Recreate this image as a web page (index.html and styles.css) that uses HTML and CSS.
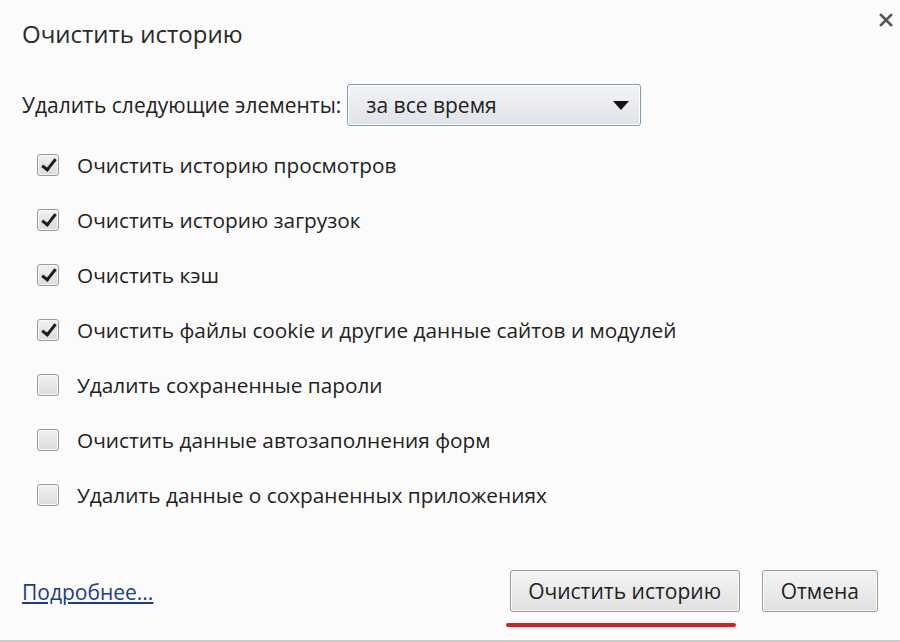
FILE: index.html
```html
<!DOCTYPE html>
<html lang="ru">
<head>
	<meta charset="UTF-8">
	<title>Очистить историю</title>
	<link rel="stylesheet" href="styles.css">
</head>
<body>
	<div class="dialog">
		<button class="close-btn" aria-label="Закрыть">
			<svg width="14" height="14" viewBox="0 0 14 14">
				<path d="M2 2 L12 12 M12 2 L2 12" stroke="#555" stroke-width="2.6" stroke-linecap="square"/>
			</svg>
		</button>

		<h1 class="title">Очистить историю</h1>

		<div class="period-row">
			<label for="period">Удалить следующие элементы:</label>
			<div class="select" id="period">
				<span>за все время</span>
				<svg class="arrow" width="16" height="9" viewBox="0 0 16 9"><path d="M0 0 H16 L8 9 Z" fill="#111"/></svg>
			</div>
		</div>

		<ul class="options">
			<li><span class="check checked"></span>Очистить историю просмотров</li>
			<li><span class="check checked"></span>Очистить историю загрузок</li>
			<li><span class="check checked"></span>Очистить кэш</li>
			<li><span class="check checked"></span>Очистить файлы cookie и другие данные сайтов и модулей</li>
			<li><span class="check"></span>Удалить сохраненные пароли</li>
			<li><span class="check"></span>Очистить данные автозаполнения форм</li>
			<li><span class="check"></span>Удалить данные о сохраненных приложениях</li>
		</ul>

		<div class="footer">
			<a href="#" class="more-link">Подробнее...</a>
			<div class="buttons">
				<button class="btn btn-primary">Очистить историю</button>
				<button class="btn">Отмена</button>
			</div>
		</div>
	</div>
</body>
</html>
```

FILE: styles.css
```css
html, body {
	margin: 0;
	padding: 0;
}

body {
	font-family: 'Open Sans', 'Noto Sans', sans-serif;
	background-color: #fbfbfb;
	color: #222;
}

.dialog {
	position: relative;
	height: 622px;
	border-bottom: 2px solid #c9c9c9;
	padding: 18px 0 0 22px;
}

.close-btn {
	position: absolute;
	top: 13px;
	right: 7px;
	border: none;
	background: none;
	padding: 0;
	cursor: pointer;
}

.title {
	margin: 0;
	font-size: 24px;
	font-weight: 400;
	line-height: 32px;
	color: #2a2a2a;
}

.period-row {
	display: flex;
	align-items: center;
	gap: 6px;
	margin-top: 34px;
	height: 42px;
	font-size: 21px;
}

.select {
	display: flex;
	align-items: center;
	justify-content: space-between;
	width: 294px;
	height: 42px;
	box-sizing: border-box;
	padding: 0 11px 0 18px;
	border: 1px solid #7f9db9;
	border-radius: 3px;
	background: linear-gradient(#f3f4f6, #dfe2e7);
	box-shadow: inset 0 0 0 1px #fff;
	color: #222;
}

.options {
	list-style: none;
	margin: 11px 0 0;
	padding: 0;
}

.options li {
	display: flex;
	align-items: center;
	height: 55px;
	font-size: 20.8px;
	color: #222;
}

.check {
	width: 22px;
	height: 22px;
	box-sizing: border-box;
	margin: 0 18px 0 15px;
	border: 1px solid #9a9a9a;
	border-radius: 3px;
	background: linear-gradient(#f0f0f0, #dcdcdc);
	box-shadow: inset 0 0 0 1px #f8f8f8;
	position: relative;
}

.check.checked::after {
	content: "";
	position: absolute;
	left: 7px;
	top: 1px;
	width: 5px;
	height: 12px;
	border: solid #1a1a1a;
	border-width: 0 3.5px 3.5px 0;
	transform: rotate(38deg);
}

.footer {
	display: flex;
	align-items: center;
	justify-content: space-between;
	margin-top: 48px;
	padding-right: 22px;
}

.more-link {
	font-size: 21px;
	color: #1c3c8c;
	text-decoration: underline;
	margin-top: 2px;
}

.buttons {
	display: flex;
	gap: 22px;
}

.btn {
	height: 42px;
	padding: 0 18px;
	font-family: 'Open Sans', 'Noto Sans', sans-serif;
	font-size: 21px;
	color: #222;
	white-space: nowrap;
	border: 1px solid #9a9a9a;
	border-radius: 3px;
	background: linear-gradient(#f4f4f4, #e1e1e1);
	box-shadow: inset 0 0 0 1px #fafafa;
	cursor: pointer;
}

.btn-primary {
	position: relative;
	width: 230px;
	padding: 0;
}

.btn-primary::after {
	content: "";
	position: absolute;
	left: -5px;
	right: 3px;
	bottom: -16px;
	height: 4px;
	border-radius: 2px;
	background-color: #d42020;
}
```
